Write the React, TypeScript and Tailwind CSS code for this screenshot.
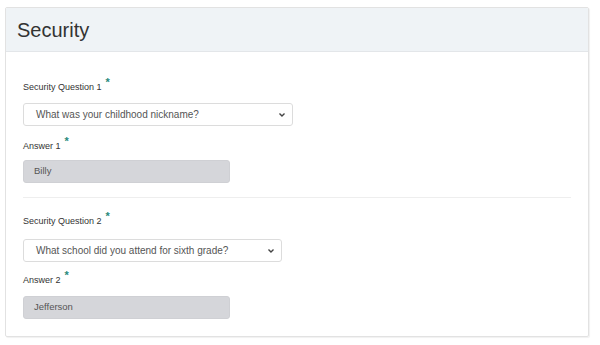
import React from "react";

function Label({ text }: { text: string }) {
  return (
    <div className="flex h-[12px] items-center text-[9px] leading-[12px] text-[#333]">
      <span>{text}</span>
      <span className="relative -top-[5px] ml-[4px] text-[11px] font-bold text-[#2a8a7c]">*</span>
    </div>
  );
}

function SelectBox({ value, width }: { value: string; width: string }) {
  return (
    <div
      className={`flex h-[23px] items-center justify-between rounded-[3px] border border-[#dcdcdc] bg-white pl-[12px] pr-[6px] text-[10px] text-[#555] ${width}`}
    >
      <span>{value}</span>
      <svg width="8" height="6" viewBox="0 0 8 6" className="text-[#444]">
        <path d="M1.5 1.5 L4 4 L6.5 1.5" fill="none" stroke="currentColor" strokeWidth="1.4" />
      </svg>
    </div>
  );
}

function ReadOnlyInput({ value }: { value: string }) {
  return (
    <div className="flex h-[23px] w-[207px] items-center rounded-[3px] border border-[#cfd0d4] bg-[#d5d6da] pl-[10px] text-[9.5px] text-[#555]">
      {value}
    </div>
  );
}

export default function App() {
  return (
    <div className="h-[345px] w-[600px] bg-white pl-[5px] pt-[7px]" style={{ fontFamily: '"Liberation Sans", Arial, sans-serif' }}>
      <div className="h-[330px] w-[584px] overflow-hidden rounded-[2px] border border-[#e2e2e2] shadow-[1px_1px_1px_rgba(0,0,0,0.06)]">
        <div className="flex h-[44px] items-center border-b border-[#e3e6e9] bg-[#eff3f6] pl-[11px]">
          <h2 className="text-[20px] leading-none text-[#333]">Security</h2>
        </div>
        <div className="px-[17px] pb-[18px]">
          <div className="mt-[29px]">
            <Label text="Security Question 1" />
          </div>
          <div className="mt-[10px]">
            <SelectBox value="What was your childhood nickname?" width="w-[270px]" />
          </div>
          <div className="mt-[14px]">
            <Label text="Answer 1" />
          </div>
          <div className="mt-[8px]">
            <ReadOnlyInput value="Billy" />
          </div>
          <div className="mt-[14px] border-t border-[#eeeeee]" />
          <div className="mt-[17px]">
            <Label text="Security Question 2" />
          </div>
          <div className="mt-[12px]">
            <SelectBox value="What school did you attend for sixth grade?" width="w-[259px]" />
          </div>
          <div className="mt-[12px]">
            <Label text="Answer 2" />
          </div>
          <div className="mt-[10px]">
            <ReadOnlyInput value="Jefferson" />
          </div>
        </div>
      </div>
    </div>
  );
}
